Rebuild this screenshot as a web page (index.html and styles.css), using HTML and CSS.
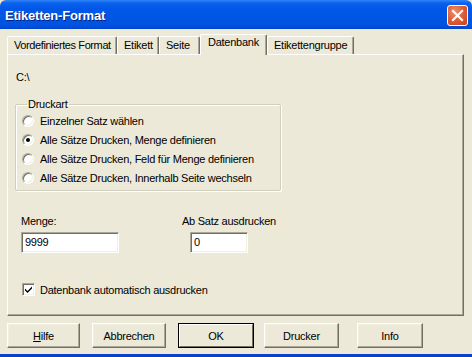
FILE: index.html
```html
<!DOCTYPE html>
<html lang="de">
<head>
<meta charset="utf-8">
<title>Etiketten-Format</title>
<link rel="stylesheet" href="styles.css">
</head>
<body>
<div class="window">
  <div class="titlebar">
    <span class="title">Etiketten-Format</span>
    <span class="close">
      <svg width="13" height="13" viewBox="0 0 13 13"><path d="M2 2 L11 11 M11 2 L2 11" stroke="#fff" stroke-width="2.2" stroke-linecap="square"/></svg>
    </span>
  </div>
  <div class="client">
    <div class="tabs">
      <div class="tab t1">Vordefiniertes Format</div>
      <div class="tab t2">Etikett</div>
      <div class="tab t3">Seite</div>
      <div class="tab active t4">Datenbank</div>
      <div class="tab t5">Etikettengruppe</div>
    </div>
    <div class="panel">
      <div class="path">C:\</div>
      <fieldset class="group">
        <legend>Druckart</legend>
        <div class="opt"><span class="radio"></span>Einzelner Satz wählen</div>
        <div class="opt"><span class="radio checked"></span>Alle Sätze Drucken, Menge definieren</div>
        <div class="opt"><span class="radio"></span>Alle Sätze Drucken, Feld für Menge definieren</div>
        <div class="opt"><span class="radio"></span>Alle Sätze Drucken, Innerhalb Seite wechseln</div>
      </fieldset>
      <div class="fields">
        <div class="field f-menge">
          <label>Menge:</label>
          <div class="input w-menge">9999</div>
        </div>
        <div class="field f-ab">
          <label>Ab Satz ausdrucken</label>
          <div class="input w-ab">0</div>
        </div>
      </div>
      <div class="check-row">
        <span class="checkbox"><svg width="9" height="9" viewBox="0 0 9 9"><path d="M1 3.5 L3.5 6 L8 1.5 L8 3.5 L3.5 8 L1 5.5 Z" fill="#000"/></svg></span>Datenbank automatisch ausdrucken
      </div>
    </div>
    <div class="buttons">
      <div class="btn b-hilfe"><u>H</u>ilfe</div>
      <div class="btn b-abbr">Abbrechen</div>
      <div class="btn default b-ok"><span>OK</span></div>
      <div class="btn b-druck">Drucker</div>
      <div class="btn b-info">Info</div>
    </div>
  </div>
</div>
</body>
</html>
```
FILE: styles.css
```css
* { box-sizing: border-box; }
html, body { margin: 0; padding: 0; }
body {
  width: 472px;
  height: 357px;
  overflow: hidden;
  background: #ECE9D8;
  font-family: "Liberation Sans", Arial, sans-serif;
  font-size: 11px;
  letter-spacing: -0.25px;
  color: #000;
}
.window {
  width: 472px;
  height: 357px;
  display: flex;
  flex-direction: column;
  background: #ECE9D8;
  border-bottom: 3px solid #0842C8;
}
.titlebar {
  height: 29px;
  flex: none;
  display: flex;
  align-items: center;
  justify-content: space-between;
  padding: 0 4px 0 5px;
  border-radius: 6px 6px 0 0;
  background: linear-gradient(#2F86F8 0px, #0C62EE 3px, #0158E8 8px, #0055E4 18px, #0053E0 25px, #0046CC 29px);
}
.title {
  color: #fff;
  font-weight: bold;
  font-size: 13px;
  letter-spacing: -0.2px;
  text-shadow: 1px 1px 0 #0A1E80;
  padding-top: 1px;
}
.close {
  width: 21px;
  height: 21px;
  margin-top: 1px;
  border: 1px solid #fff;
  border-radius: 3px;
  background: radial-gradient(circle at 35% 30%, #F09070 0%, #E0603A 45%, #C8401A 100%);
  display: flex;
  align-items: center;
  justify-content: center;
}
.client {
  flex: 1;
  display: flex;
  flex-direction: column;
  padding: 5px 0 0 7px;
}
.tabs {
  display: flex;
  align-items: flex-end;
  height: 20px;
  position: relative;
  z-index: 2;
}
.tab {
  height: 18px;
  line-height: 16px;
  padding: 0 4px 0 6px;
  border-top: 1px solid #fff;
  border-left: 1px solid #fff;
  border-right: 1px solid #716F64;
  box-shadow: inset -1px 0 0 #ACA899;
  border-radius: 2px 2px 0 0;
  white-space: nowrap;
}
.t1 { width: 110px; letter-spacing: -0.4px; }
.t2 { width: 42px; }
.t3 { width: 41px; }
.t5 { width: 87px; }
.tab.active {
  height: 21px;
  margin-bottom: -1px;
  width: 67px;
  padding: 0 0 0 7px;
  line-height: 15px;
  background: #ECE9D8;
  border-left: 1px solid #fff;
  border-right: 1px solid #716F64;
}
.panel {
  width: 457px;
  height: 262px;
  border-top: 1px solid #fff;
  border-left: 1px solid #fff;
  border-right: 1px solid #716F64;
  border-bottom: 1px solid #716F64;
  box-shadow: inset -1px -1px 0 #ACA899;
  padding: 0 8px;
  display: flex;
  flex-direction: column;
  align-items: flex-start;
}
.path {
  margin-top: 16px;
  line-height: 13px;
}
.group {
  margin: 14px 0 0 -1px;
  width: 266px;
  padding: 0 0 3px 6px;
  border: 1px solid #D0CEBF;
  box-shadow: inset 1px 1px 0 #fff, 1px 1px 0 #fff;
  border-radius: 2px;
}
.group legend {
  padding: 0 1px;
  margin-left: 5px;
  line-height: 13px;
}
.opt {
  height: 19px;
  display: flex;
  align-items: center;
  white-space: nowrap;
}
.radio {
  width: 12px;
  height: 12px;
  margin-right: 6px;
  border-radius: 50%;
  border: 1px solid;
  border-color: #ACA899 #fff #fff #ACA899;
  background: #fff;
  box-shadow: inset 1px 1px 0 #716F64, inset -1px -1px 0 #F1EFE2;
  display: flex;
  align-items: center;
  justify-content: center;
}
.radio.checked::after {
  content: "";
  width: 4px;
  height: 4px;
  border-radius: 50%;
  background: #000;
}
.fields {
  display: flex;
  margin: 24px 0 0 5px;
}
.field {
  display: flex;
  flex-direction: column;
  align-items: flex-start;
}
.field label {
  line-height: 13px;
  margin-bottom: 4px;
}
.f-menge { width: 161px; }
.f-ab .input { margin-left: 8px; }
.input {
  height: 21px;
  background: #fff;
  border: 1px solid;
  border-color: #ACA899 #fff #fff #ACA899;
  box-shadow: inset 1px 1px 0 #716F64, inset -1px -1px 0 #F1EFE2;
  padding: 0 3px;
  line-height: 19px;
}
.w-menge { width: 98px; }
.w-ab { width: 58px; }
.check-row {
  margin: 29px 0 0 6px;
  display: flex;
  align-items: center;
  height: 15px;
}
.checkbox {
  width: 13px;
  height: 13px;
  margin-right: 5px;
  border: 1px solid;
  border-color: #ACA899 #fff #fff #ACA899;
  background: #fff;
  box-shadow: inset 1px 1px 0 #716F64, inset -1px -1px 0 #F1EFE2;
  display: flex;
  align-items: center;
  justify-content: center;
}
.buttons {
  display: flex;
  margin-top: 7px;
  margin-left: 0;
}
.btn {
  height: 25px;
  display: flex;
  align-items: center;
  justify-content: center;
  border: 1px solid;
  border-color: #fff #716F64 #716F64 #fff;
  box-shadow: inset -1px -1px 0 #ACA899, inset 1px 1px 0 #F1EFE2;
}
.btn.default {
  border: 1px solid #000;
  box-shadow: none;
  padding: 0;
}
.btn.default span {
  width: 100%;
  height: 100%;
  display: flex;
  align-items: center;
  justify-content: center;
  border: 1px solid;
  border-color: #fff #716F64 #716F64 #fff;
}
.b-hilfe { width: 73px; }
.b-abbr { width: 74px; margin-left: 12px; }
.b-ok { width: 76px; margin-left: 12px; }
.b-druck { width: 75px; margin-left: 10px; }
.b-info { width: 66px; margin-left: 18px; }
```
